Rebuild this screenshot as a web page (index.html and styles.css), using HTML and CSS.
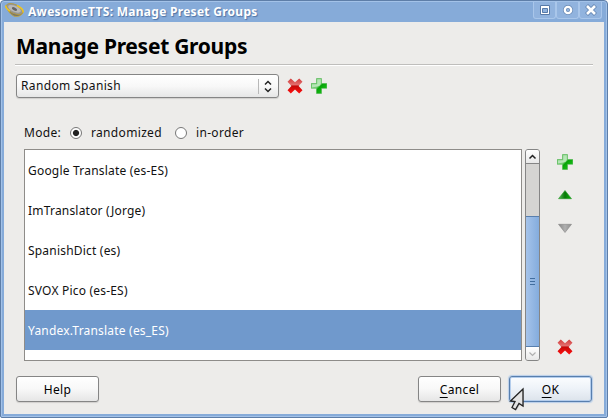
FILE: index.html
```html
<!DOCTYPE html>
<html lang="en">
<head>
<meta charset="utf-8">
<title>AwesomeTTS: Manage Preset Groups</title>
<link rel="stylesheet" href="styles.css">
</head>
<body>
<svg class="defs" width="0" height="0" aria-hidden="true">
  <defs>
    <linearGradient id="red" x1="0" y1="0" x2="0" y2="1"><stop offset="0" stop-color="#d23c3c"/><stop offset=".42" stop-color="#e27070"/><stop offset=".5" stop-color="#c40808"/><stop offset="1" stop-color="#ff1010"/></linearGradient>
    <linearGradient id="green" x1="0" y1="0" x2="1" y2="1"><stop offset="0" stop-color="#58bd58"/><stop offset=".46" stop-color="#7cd07c"/><stop offset=".56" stop-color="#08a408"/><stop offset="1" stop-color="#20cc20"/></linearGradient>
    <linearGradient id="up" x1="0" y1="0" x2="1" y2="0"><stop offset="0" stop-color="#58bd58"/><stop offset=".5" stop-color="#087808"/><stop offset="1" stop-color="#08b808"/></linearGradient>
    <linearGradient id="down" x1="0" y1="0" x2="1" y2="0"><stop offset="0" stop-color="#858585"/><stop offset=".5" stop-color="#b0b0b0"/><stop offset="1" stop-color="#8d8d8d"/></linearGradient>
    <symbol id="cross" viewBox="0 0 16 16"><path d="M3.800 .6 8 4.300 12.200.6 15.500 3.700 11.600 8 15.500 12.300 12.200 15.400 8 11.600 3.800 15.400.5 12.300 4.400 8 .5 3.700Z" fill="url(#red)"/></symbol>
    <symbol id="plus" viewBox="0 0 16 16"><path d="M5.500.5h5v5h5.300v4.800h-5.300v5.200h-5v-5.200H.2V5.500h5.300Z" fill="url(#green)" stroke="#3fae3f" stroke-width=".5"/><path d="M6.200 1.200h3.600v5L8.500 8 1 9.400V6.200h5.200Z" fill="#e2f6e2" opacity=".6"/></symbol>
  </defs>
</svg>
<div class="window">
  <header class="titlebar">
    <svg class="appicon" width="20" height="16" viewBox="0 0 20 16"><path d="M1 4Q4 11 9 13.200Q15 14.500 18 10Z" fill="#77746a" stroke="#c9a93a" stroke-width=".8"/><ellipse cx="9.500" cy="6" rx="9" ry="4.500" transform="rotate(24 9.500 6)" fill="#969696" stroke="#b69b3a" stroke-width=".8"/><path d="M1 2.500Q0 5 5 8M12 2.500Q19 6 18 9.500" fill="none" stroke="#f0c61c" stroke-width="1.500"/><ellipse cx="9.500" cy="5.800" rx="6.800" ry="3" transform="rotate(24 9.500 5.800)" fill="#b8b8b8"/><ellipse cx="9.500" cy="6" rx="2.800" ry="1.500" transform="rotate(24 9.500 6)" fill="#666"/></svg>
    <span class="caption">AwesomeTTS: Manage Preset Groups</span>
    <div class="controls">
      <span class="control"><svg width="12" height="12" viewBox="0 0 12 12"><path d="M1.500 1.500h9v9h-9zM3.500 4.500h5v4h-5z" fill="#fff" fill-rule="evenodd" stroke="#587aa8"/></svg></span>
      <span class="control"><svg width="12" height="12" viewBox="0 0 12 12"><circle cx="6" cy="6" r="3.200" fill="none" stroke="#6788b4" stroke-width="3.800"/><circle cx="6" cy="6" r="3.200" fill="none" stroke="#fff" stroke-width="2.300"/></svg></span>
      <span class="control"><svg width="12" height="12" viewBox="0 0 12 12"><path d="m1.500 1.500 9 9m0-9-9 9" stroke="#6788b4" stroke-width="4.400"/><path d="m2 2 8 8m0-8-8 8" stroke="#fff" stroke-width="2.600"/></svg></span>
    </div>
  </header>
  <main class="content">
    <h1 class="heading"><span>Manage Preset Groups</span></h1>
    <div class="presets">
      <div class="combo"><span class="t-combo">Random Spanish</span><svg class="arrows" width="20" height="19" viewBox="0 0 20 19"><path d="M.5 2v15" stroke="#b8b8b8"/><path d="m7 7.500 3-3 3 3M7 11.500l3 3 3-3" fill="none" stroke="#222" stroke-width="1.500"/></svg></div>
      <svg class="icon" width="16" height="16"><use href="#cross"/></svg>
      <svg class="icon" width="16" height="16"><use href="#plus"/></svg>
    </div>
    <div class="mode">
      <span class="t-mode">Mode:</span>
      <i class="radio checked"></i><span class="t-random">randomized</span>
      <i class="radio"></i><span class="t-order">in-order</span>
    </div>
    <div class="editor">
      <ul class="list">
        <li><span>Google Translate (es-ES)</span></li>
        <li><span>ImTranslator (Jorge)</span></li>
        <li><span>SpanishDict (es)</span></li>
        <li><span>SVOX Pico (es-ES)</span></li>
        <li class="selected"><span>Yandex.Translate (es_ES)</span></li>
      </ul>
      <div class="scrollbar">
        <div class="step"><svg width="9" height="6" viewBox="0 0 9 6"><path d="m1.500 4.500 3-3 3 3" fill="none" stroke="#222" stroke-width="1.500"/></svg></div>
        <div class="track"></div>
        <div class="thumb"><i></i><i></i><i></i></div>
        <div class="step bottom"><svg width="9" height="6" viewBox="0 0 9 6"><path d="m1.500 1.500 3 3 3-3" fill="none" stroke="#b0b0b0" stroke-width="1.200"/></svg></div>
      </div>
      <div class="actions">
        <svg width="16" height="16"><use href="#plus"/></svg>
        <svg width="16" height="16" viewBox="0 0 16 16"><path d="m8 3.500 6.500 8.200h-13Z" fill="url(#up)" stroke="#299629" stroke-width=".6"/></svg>
        <svg width="16" height="16" viewBox="0 0 16 16"><path d="M1.500 4.300h13L8 12.500Z" fill="url(#down)" stroke="#858585" stroke-width=".6"/></svg>
        <svg class="remove" width="16" height="16"><use href="#cross"/></svg>
      </div>
    </div>
    <footer class="buttons">
      <div class="button help"><span>Help</span></div>
      <div class="button"><span><u>C</u>ancel</span></div>
      <div class="button primary"><span><u>O</u>K</span></div>
    </footer>
  </main>
  <svg class="cursor" width="18" height="26" viewBox="0 0 18 26"><path d="M14 2 1.500 14l4.500.5-3 6 3.500 2 3.500-6 4 2.500Z" transform="translate(1 1)" fill="#888" opacity=".35"/><path d="M14 2 1.500 14l4.500.5-3 6 3.500 2 3.500-6 4 2.500Z" fill="#e4e4e4" stroke="#222" stroke-width="1.300"/></svg>
</div>
</body>
</html>
```
FILE: styles.css
```css
* { box-sizing: border-box; }
body { margin: 0; width: 608px; height: 418px; overflow: hidden; background: #fff; font: 12px/16px "Noto Sans", "Open Sans", sans-serif; letter-spacing: .2px; color: #111; }
.defs { position: absolute; }
svg { display: block; flex: none; }
span { white-space: nowrap; }
.window { position: relative; width: 608px; height: 418px; padding: 0 3px 3px; background: #86abd9; border: 1px solid #5e7ea8; border-radius: 4px 4px 2px 2px; box-shadow: inset 0 0 0 1px #a3c2e8; }
.titlebar { height: 21px; display: flex; align-items: flex-start; }
.appicon { margin: 2px 0 0 1px; }
.caption { margin: 3px 0 0 3px; font-weight: bold; letter-spacing: .28px; color: #fff; text-shadow: 1px 1px 1px #4f73a4; }
.controls { display: flex; margin: 1px 2px 0 auto; }
.control { width: 23px; height: 17px; padding: 2px 5px; background: #91b3de; border: 1px solid #a9c6ea; border-top: 0; border-radius: 0 0 3px 3px; }
.content { height: 392px; background: #edecea; padding: 0 11px; }
.heading { height: 43px; margin: 0; padding: 10px 0 0 1px; font: bold 21px/28px "Noto Sans", sans-serif; letter-spacing: -.28px; color: #000; border-bottom: 1px solid #bfbebc; box-shadow: 0 1px #fff; }
.presets { display: flex; align-items: center; height: 24px; margin: 9px 0 0 1px; }
.combo { width: 263px; height: 24px; display: flex; align-items: center; justify-content: space-between; padding: 0 0 0 4px; border: 1px solid #858585; border-radius: 3px; background: linear-gradient(#fff, #f8f8f8 50%, #e6e6e6); box-shadow: 0 1px 1px #d0cfcd; }
.t-combo { letter-spacing: .36px; }
.icon { margin-left: 8px; }
.mode { display: flex; align-items: center; height: 16px; margin: 27px 0 0 9px; letter-spacing: .33px; }
.radio { width: 12px; height: 12px; border: 1px solid #777; border-radius: 50%; background: #fff; }
.checked { background: radial-gradient(circle, #222 0 2.600px, #fff 3.600px); }
.t-mode { width: 46px; }
.t-random { width: 84px; margin-left: 9px; }
.t-order { margin-left: 9px; }
.editor { display: flex; height: 212px; margin: 8px 0 0 9px; }
.list { width: 498px; margin: 0; padding: 0; list-style: none; border: 1px solid #8e8c89; background: #fff; }
.list li { height: 40px; padding: 13px 3px 11px; }
.list .selected { background: #7099cc; color: #fff; }
.scrollbar { width: 15px; margin-left: 3px; display: flex; flex-direction: column; border: 1px solid #858585; border-radius: 3px; background: #d5d4d2; overflow: hidden; }
.step { height: 14px; display: flex; align-items: center; justify-content: center; background: linear-gradient(#fff, #e8e8e8); border-bottom: 1px solid #858585; }
.track { flex: 1; }
.thumb { width: 15px; height: 131px; margin-left: -1px; display: flex; flex-direction: column; gap: 2px; align-items: center; justify-content: center; border: 1px solid #587fae; background: linear-gradient(90deg, #a5c3ea, #84acdd); }
.thumb i { width: 5px; height: 1px; background: #426e9f; }
.bottom { height: 13px; border: 0; }
.actions { width: 16px; margin-left: 17px; padding-top: 5px; display: flex; flex-direction: column; gap: 17px; }
.remove { margin: auto 0 6px; }
.buttons { display: flex; gap: 8px; height: 26px; margin: 15px 1px 0; }
.button { width: 83px; height: 26px; padding-top: 1px; display: flex; align-items: center; justify-content: center; border: 1px solid #858585; border-radius: 3px; background: linear-gradient(#fff, #f8f8f8 50%, #e6e6e6); box-shadow: 0 1px 1px #d0cfcd; color: #000; letter-spacing: .35px; }
.help { margin-right: auto; }
.primary { border-color: #587fae; background: linear-gradient(#fbfdff, #edf2f8 50%, #dce3eb); box-shadow: inset 0 0 0 1px #b4cdec, 0 0 1px 1px #b8cfea; }
.button u { text-decoration: underline 1px; text-underline-offset: 3px; text-decoration-skip-ink: none; }
.cursor { position: absolute; left: 508px; top: 386px; }
```
